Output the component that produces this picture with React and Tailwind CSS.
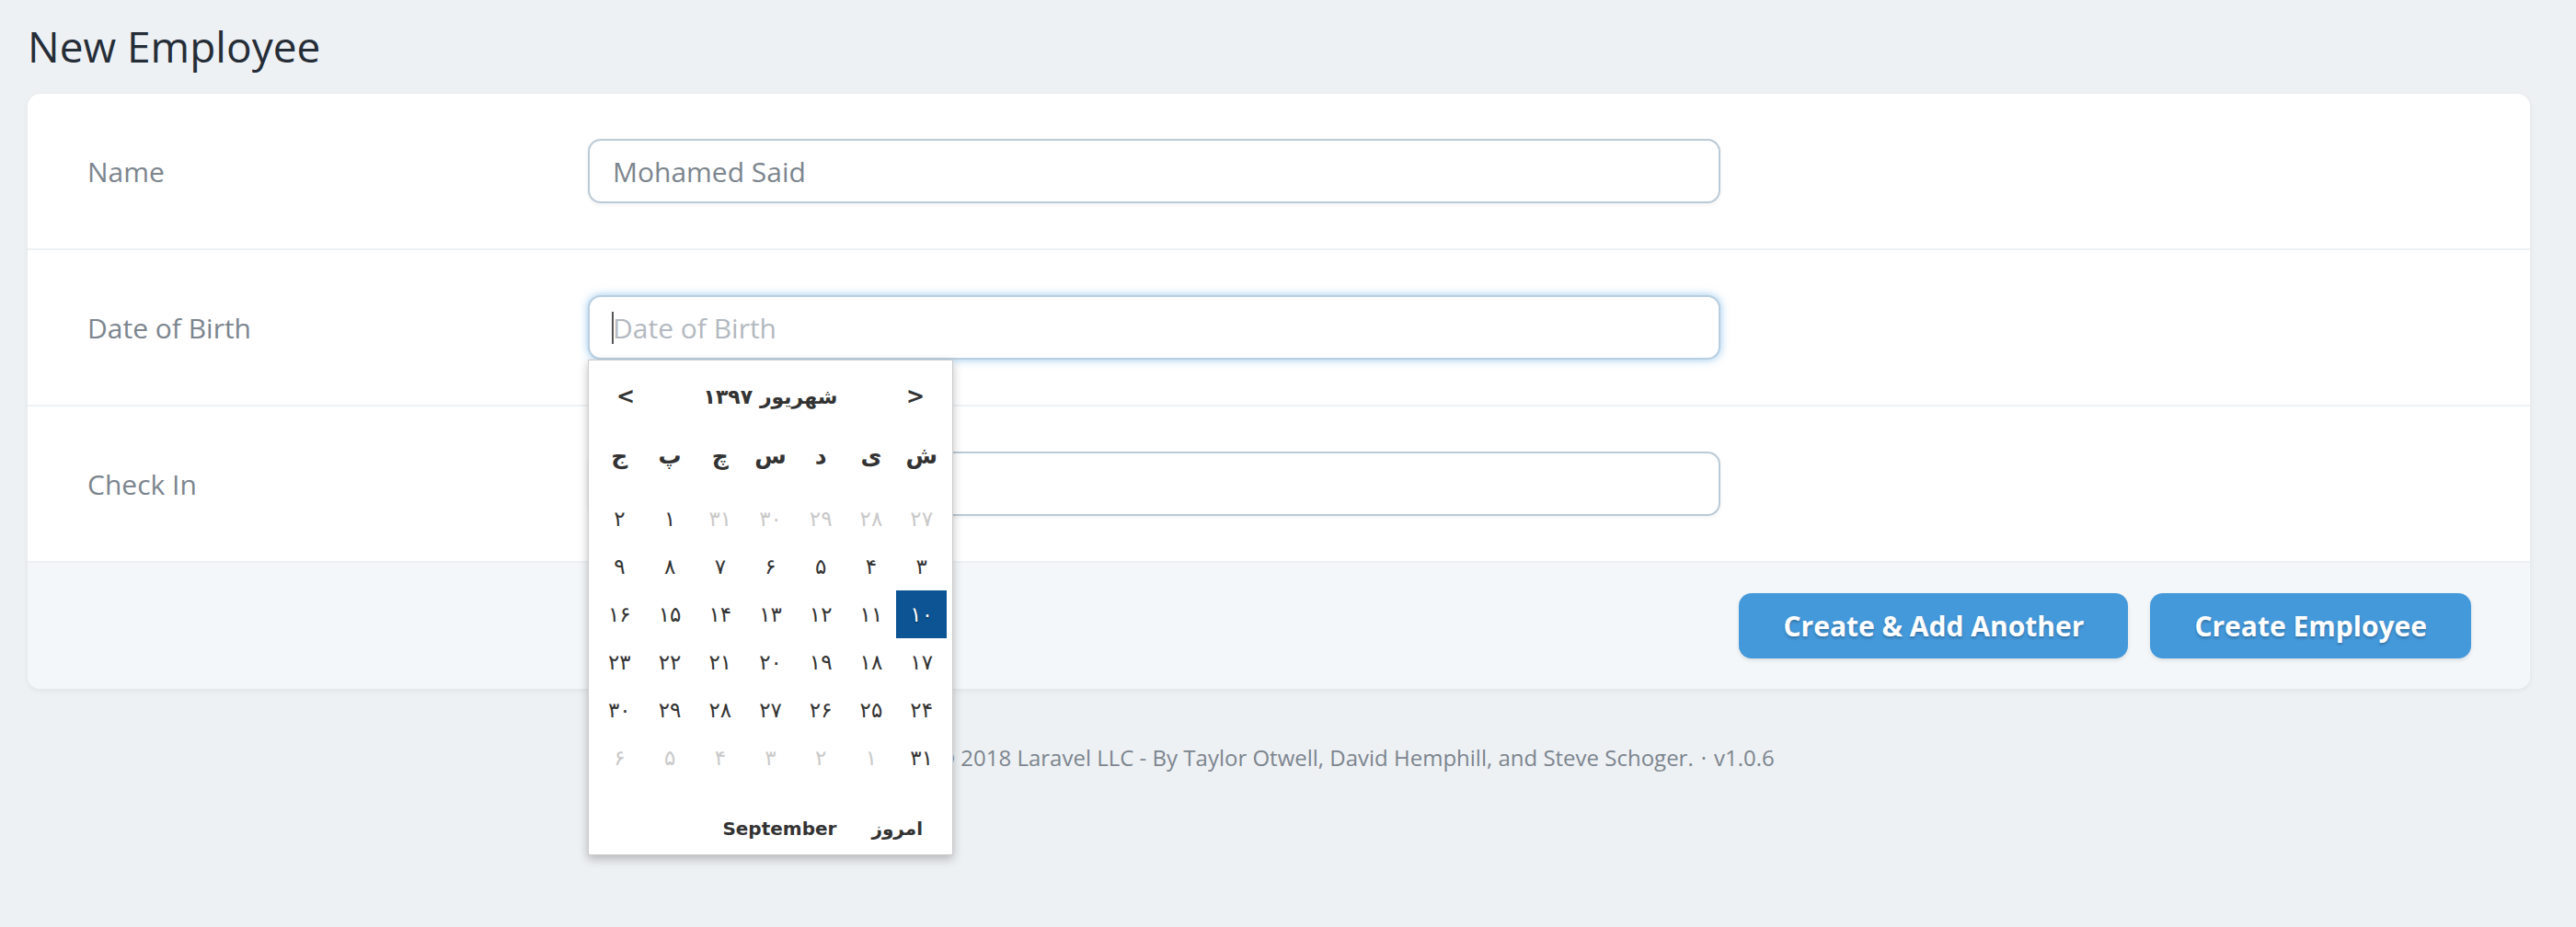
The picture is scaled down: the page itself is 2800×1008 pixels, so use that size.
const days = [
  [
    { d: '۲۷', muted: true },
    { d: '۲۸', muted: true },
    { d: '۲۹', muted: true },
    { d: '۳۰', muted: true },
    { d: '۳۱', muted: true },
    { d: '۱' },
    { d: '۲' },
  ],
  ['۳', '۴', '۵', '۶', '۷', '۸', '۹'].map((d) => ({ d })),
  ['۱۰', '۱۱', '۱۲', '۱۳', '۱۴', '۱۵', '۱۶'].map((d) => ({ d, selected: d === '۱۰' })),
  ['۱۷', '۱۸', '۱۹', '۲۰', '۲۱', '۲۲', '۲۳'].map((d) => ({ d })),
  ['۲۴', '۲۵', '۲۶', '۲۷', '۲۸', '۲۹', '۳۰'].map((d) => ({ d })),
  [
    { d: '۳۱' },
    { d: '۱', muted: true },
    { d: '۲', muted: true },
    { d: '۳', muted: true },
    { d: '۴', muted: true },
    { d: '۵', muted: true },
    { d: '۶', muted: true },
  ],
];

const weekDays = ['ش', 'ی', 'د', 'س', 'چ', 'پ', 'ج'];

const DatePicker = () => (
  <div
    className="absolute left-0 top-[70px] z-10 w-[397px] h-[539px] bg-white border border-[#cccccc] shadow-[0_4px_10px_rgba(0,0,0,0.25)] px-[6px]"
    style={{ fontFamily: '"DejaVu Sans", Tahoma, sans-serif' }}
  >
    {/* month header */}
    <div className="flex items-center justify-between h-[76px] pt-[2px] px-[24px] text-[24px] font-bold text-[#333]">
      <span>&lt;</span>
      <span dir="rtl" className="text-[22px]">شهریور ۱۳۹۷</span>
      <span>&gt;</span>
    </div>

    <div dir="rtl" className="grid grid-cols-7 h-[56px] items-center text-center text-[25px] font-bold text-[#333]">
      {weekDays.map((w) => (
        <span key={w}>{w}</span>
      ))}
    </div>

    <div dir="rtl" className="mt-[14px] flex flex-col">
      {days.map((row, i) => (
        <div key={i} className="grid grid-cols-7 h-[52px]">
          {row.map((cell, j) => (
            <div
              key={j}
              className={`flex items-center justify-center text-[23px] ${
                cell.selected
                  ? 'bg-[#0d5494] text-white [text-shadow:0_1px_2px_rgba(0,0,0,0.6)]'
                  : cell.muted
                  ? 'text-[#c9c9c9]'
                  : 'text-[#333]'
              }`}
            >
              {cell.d}
            </div>
          ))}
        </div>
      ))}
    </div>

    <div dir="rtl" className="flex items-center gap-[38px] pr-[26px] mt-[36px] text-[20px] font-bold text-[#333]">
      <span>امروز</span>
      <span>September</span>
    </div>
  </div>
);

const Field = ({ label, children, last }) => (
  <div className={`flex items-center pt-[49px] pb-[49px] ${last ? '' : 'border-b-2 border-[#eef1f4]'}`}>
    <div className="w-[609px] pl-[65px] text-[30px] text-[#7c858e]">{label}</div>
    <div className="relative w-[1231px]">{children}</div>
  </div>
);

const inputClass =
  'w-full h-[70px] px-[25px] rounded-[14px] bg-white border-2 text-[30px] text-[#7c858e] placeholder:text-[#b3b9bf] outline-none';

export default function App() {
  return (
    <div
      className="min-h-screen bg-[#eef1f4] pl-[30px] pr-[50px] pt-[20px]"
      style={{ fontFamily: '"Open Sans", "Noto Sans", sans-serif' }}
    >
      <h1 className="text-[46px] leading-[60px] text-[#252d37] font-normal mb-[22px]">New Employee</h1>

      <div className="bg-white rounded-[14px] shadow-[0_2px_6px_rgba(0,0,0,0.06)]">
        <Field label="Name">
          <input
            readOnly
            defaultValue="Mohamed Said"
            className={`${inputClass} border-[#bacad6] shadow-[0_2px_4px_rgba(0,0,0,0.05)]`}
          />
        </Field>
        <Field label="Date of Birth">
          <input
            readOnly
            placeholder="Date of Birth"
            className={`${inputClass} border-[#b9cfe0] shadow-[0_0_10px_rgba(64,153,222,0.55)]`}
          />
          {/* caret */}
          <span className="absolute left-[26px] top-[18px] w-[2px] h-[35px] bg-[#555]" />
          <DatePicker />
        </Field>
        <Field label="Check In" last>
          <input
            readOnly
            placeholder="Check In"
            className={`${inputClass} border-[#bacad6] shadow-[0_2px_4px_rgba(0,0,0,0.05)]`}
          />
        </Field>

        {/* actions */}
        <div className="flex justify-end gap-[24px] bg-[#f4f7fa] border-t-2 border-[#eef1f4] rounded-b-[14px] pt-[33px] pb-[33px] pr-[64px]">
          <button className="h-[71px] px-[48px] rounded-[14px] bg-[#4499db] text-white text-[30px] font-bold shadow-[0_2px_4px_rgba(0,0,0,0.1)] [text-shadow:0_2px_3px_rgba(0,0,0,0.25)]">
            Create &amp; Add Another
          </button>
          <button className="h-[71px] px-[48px] rounded-[14px] bg-[#4499db] text-white text-[30px] font-bold shadow-[0_2px_4px_rgba(0,0,0,0.1)] [text-shadow:0_2px_3px_rgba(0,0,0,0.25)]">
            Create Employee
          </button>
        </div>
      </div>

      <p className="text-center text-[24px] text-[#7c858e] mt-[57px]">
        <span className="text-[#4099de]">Laravel Nova</span>
        <span className="px-[8px]">·</span>© 2018 Laravel LLC - By Taylor Otwell, David Hemphill, and Steve Schoger.
        <span className="px-[8px]">·</span>v1.0.6
      </p>
    </div>
  );
}
